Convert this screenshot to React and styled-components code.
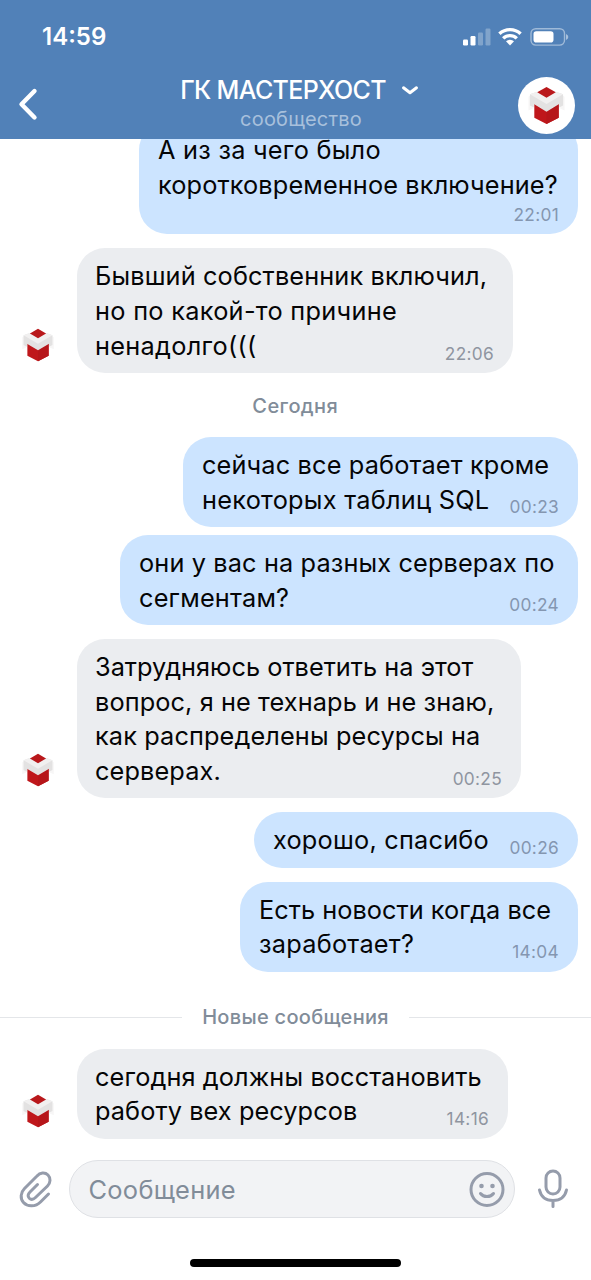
import React from "react";
import styled, { createGlobalStyle } from "styled-components";

const GlobalStyle = createGlobalStyle`
  * {
    box-sizing: border-box;
  }
  body {
    margin: 0;
    background: #fff;
    font-family: Inter, "Liberation Sans", sans-serif;
  }
`;

const Screen = styled.div`
  width: 591px;
  height: 1280px;
  display: flex;
  flex-direction: column;
  overflow: hidden;
  background: #fff;
`;
const Header = styled.header`
  height: 139px;
  flex: none;
  background: #5181b8;
  color: #fff;
`;
const StatusBar = styled.div`
  height: 74px;
  padding: 0 22px 0 42px;
  display: flex;
  align-items: center;
  justify-content: space-between;
`;
const Clock = styled.div`
  font-size: 24px;
  font-weight: 600;
  line-height: 28px;
`;
const StatusIcons = styled.svg`
  width: 106px;
  height: 20px;
  display: block;
`;
const NavBar = styled.div`
  height: 65px;
  padding: 0 16px;
  display: grid;
  grid-template-columns: 60px 1fr 60px;
  align-items: start;
`;
const BackButton = styled.button`
  width: 24px;
  height: 34px;
  margin-top: 13px;
  padding: 0;
  border: 0;
  background: none;
`;
const Heading = styled.div`
  display: flex;
  flex-direction: column;
  align-items: center;
`;
const Title = styled.div`
  display: flex;
  align-items: center;
  gap: 15px;
  padding-left: 8px;
  font-size: 25px;
  font-weight: 450;
  line-height: 32px;
  letter-spacing: -0.65px;
  white-space: nowrap;
`;
const Subtitle = styled.div`
  padding-left: 11px;
  font-size: 20px;
  line-height: 26px;
  letter-spacing: 0.2px;
  color: #a8c0dc;
`;
const HeaderAvatar = styled.div`
  width: 57px;
  height: 57px;
  margin: 3px 0 0 3px;
  display: flex;
  align-items: center;
  justify-content: center;
  border-radius: 50%;
  background: #fff;
`;
const Chat = styled.main`
  height: 1021px;
  flex: none;
  display: flex;
  flex-direction: column;
  justify-content: flex-end;
  padding: 0 13.5px 21.5px 13px;
  overflow: hidden;
`;
const Row = styled.div`
  flex: none;
  display: flex;
  align-items: flex-end;
  justify-content: ${(p) => (p.$own ? "flex-end" : "flex-start")};
  margin-top: ${(p) => (p.$tight ? 8 : 14)}px;
`;
const Avatar = styled.div`
  width: 50px;
  height: 50px;
  margin: 0 13.5px 3px 0;
  display: flex;
  align-items: center;
  justify-content: center;
`;
const Bubble = styled.div`
  width: ${(p) => p.$width}px;
  padding: 11.1px 18.5px 9.5px ${(p) => (p.$own ? 19.1 : 18.5)}px;
  border-radius: 28px;
  background: ${(p) => (p.$own ? "#cce4ff" : "#ebedf0")};
`;
const Line = styled.div`
  display: flex;
  justify-content: space-between;
  height: 34.7px;
  font-size: 25.3px;
  line-height: 34.7px;
  letter-spacing: ${(p) => p.$spacing}px;
  color: #050506;
  white-space: nowrap;
`;
const Time = styled.div`
  align-self: flex-end;
  font-size: 17.3px;
  line-height: 20px;
  letter-spacing: 0.3px;
  color: ${(p) => (p.$own ? "#8496b0" : "#8f95a0")};
`;
const TimeRow = styled.div`
  height: 22px;
  display: flex;
  justify-content: flex-end;
`;
const DayLabel = styled.div`
  flex: none;
  height: 22px;
  margin: 22px 0 6px;
  font-size: 20px;
  font-weight: 500;
  line-height: 22px;
  letter-spacing: 0.4px;
  text-align: center;
  color: #818c99;
`;
const NewMessages = styled.div`
  flex: none;
  height: 22px;
  margin: 34.5px -13.5px 6.5px -13px;
  display: flex;
  align-items: center;
  gap: 20px;
  font-size: 20px;
  font-weight: 500;
  line-height: 22px;
  letter-spacing: 0.3px;
  color: #818c99;
  &::before,
  &::after {
    content: "";
    flex: 1;
    height: 1px;
    background: #e4e6e9;
  }
`;
const Composer = styled.footer`
  flex: none;
  display: flex;
  align-items: center;
  padding: 0 19px;
`;
const Field = styled.div`
  width: 446px;
  height: 58px;
  margin: 0 22px 0 17px;
  padding: 0 9px 0 18.5px;
  display: flex;
  align-items: center;
  justify-content: space-between;
  border: 1.5px solid #dfe1e5;
  border-radius: 29px;
  background: #f2f3f5;
  font-size: 25.4px;
  letter-spacing: 0.3px;
  color: #818c99;
`;
const Icon = styled.svg`
  display: block;
  flex: none;
  fill: none;
  stroke: #959cab;
  stroke-width: 3;
  stroke-linecap: round;
  stroke-linejoin: round;
`;
const HomeIndicator = styled.div`
  width: 211px;
  height: 8px;
  margin: 41px auto 0;
  border-radius: 4px;
  background: #000;
`;

function Logo({ size }) {
  return (
    <svg width={size} height={size} viewBox="0 0 40 40">
      <path d="M1.500 11 L6 8 V23 L1.500 25Z M38.500 11 L34 8 V23 L38.500 25Z" fill="#f7f6f6" />
      <path d="M7.500 17 L20 25 L32.500 17 V32.500 L20 39 L7.500 32.500Z" fill="#bf171b" />
      <path d="M20 24 L32.500 17 V32.500 L20 39Z" fill="#b6161a" />
      <path d="M3 8.500 L10.500 6 L20 11.500 L29.500 6 L37 8.500 V20 L33 22 V18.500 L20 26.300 L7 18.500 V22 L3 20Z" fill="#e3e2e2" />
      <path d="M3 8.500 L10.500 6 L20 11.500 L29.500 6 L37 8.500 L20 18.500Z" fill="#f1f0f0" />
      <path d="M20 1 L29.500 6.500 L20 12 L10.500 6.500Z" fill="#b9181b" />
    </svg>
  );
}

// each line is [text, letter spacing]
function Message({ own, tight, width, lines, time, timeBelow }) {
  return (
    <Row $own={own} $tight={tight}>
      {!own && (
        <Avatar>
          <Logo size={34} />
        </Avatar>
      )}
      <Bubble $own={own} $width={width}>
        {lines.map(([text, spacing], i) => (
          <Line key={text} $spacing={spacing}>
            <span>{text}</span>
            {i === lines.length - 1 && !timeBelow && <Time $own={own}>{time}</Time>}
          </Line>
        ))}
        {timeBelow && (
          <TimeRow>
            <Time $own={own}>{time}</Time>
          </TimeRow>
        )}
      </Bubble>
    </Row>
  );
}

function App() {
  return (
    <Screen>
      <GlobalStyle />
      <Header>
        <StatusBar>
          <Clock>14:59</Clock>
          <StatusIcons viewBox="0 0 106 20" fill="#fff">
            <rect x="0" y="12.5" width="5" height="6" rx="1.2" />
            <rect x="7.5" y="9" width="5" height="9.5" rx="1.2" />
            <rect x="15" y="5.5" width="5" height="13" rx="1.2" opacity="0.28" />
            <rect x="22.5" y="1.5" width="5" height="17" rx="1.2" opacity="0.28" />
            <g fill="none" stroke="#fff" strokeWidth="3.4">
              <path d="M36.4 6.8 A15.5 15.5 0 0 1 57.6 6.8" />
              <path d="M40.2 11.4 A9.8 9.8 0 0 1 53.8 11.4" />
            </g>
            <path d="M43 14.3 A5.7 5.7 0 0 1 51 14.3 L47 18.4Z" />
            <rect x="68" y="1.7" width="33.5" height="16.4" rx="4.8" fill="none" stroke="#fff" strokeWidth="1.4" opacity="0.45" />
            <rect x="70.5" y="4.2" width="20" height="11.4" rx="2.8" />
            <path d="M103 7 Q105.3 8 105.3 10 Q105.3 12 103 13Z" opacity="0.5" />
          </StatusIcons>
        </StatusBar>
        <NavBar>
          <BackButton>
            <svg width="24" height="34" fill="none" stroke="#fff" strokeWidth="4.4" strokeLinecap="round" strokeLinejoin="round">
              <path d="M18.5 4 L5.5 17.2 L18.5 30.500" />
            </svg>
          </BackButton>
          <Heading>
            <Title>
              ГК МАСТЕРХОСТ
              <svg width="18" height="12" fill="none" stroke="#fff" strokeWidth="3" strokeLinecap="round" strokeLinejoin="round">
                <path d="M2.500 3.800 L9 8.800 L15.500 3.800" />
              </svg>
            </Title>
            <Subtitle>сообщество</Subtitle>
          </Heading>
          <HeaderAvatar>
            <Logo size={39} />
          </HeaderAvatar>
        </NavBar>
      </Header>
      <Chat>
        <Message
          own
          width={438.6}
          lines={[
            ["А из за чего было", 0.25],
            ["коротковременное включение?", 0.13],
          ]}
          time="22:01"
          timeBelow
        />
        <Message
          width={436}
          lines={[
            ["Бывший собственник включил,", 0.13],
            ["но по какой-то причине", 0.3],
            ["ненадолго(((", 0.3],
          ]}
          time="22:06"
        />
        <DayLabel>Сегодня</DayLabel>
        <Message
          own
          width={394.6}
          lines={[
            ["сейчас все работает кроме", 0.15],
            ["некоторых таблиц SQL", 0.26],
          ]}
          time="00:23"
        />
        <Message
          own
          tight
          width={457.6}
          lines={[
            ["они у вас на разных серверах по", 0.13],
            ["сегментам?", 0.2],
          ]}
          time="00:24"
        />
        <Message
          width={444}
          lines={[
            ["Затрудняюсь ответить на этот", 0.02],
            ["вопрос, я не технарь и не знаю,", 0.1],
            ["как распределены ресурсы на", 0.12],
            ["серверах.", 0.12],
          ]}
          time="00:25"
        />
        <Message own width={323.6} lines={[["хорошо, спасибо", 0.23]]} time="00:26" />
        <Message
          own
          width={337.6}
          lines={[
            ["Есть новости когда все", 0.03],
            ["заработает?", 0.26],
          ]}
          time="14:04"
        />
        <NewMessages>Новые сообщения</NewMessages>
        <Message
          width={431}
          lines={[
            ["сегодня должны восстановить", 0.11],
            ["работу вех ресурсов", 0.08],
          ]}
          time="14:16"
        />
      </Chat>
      <Composer>
        <Icon width="33" height="38" viewBox="0 0 33 38">
          <path d="M29.5 24 L21.500 32 C16.500 37 8.500 37 4.500 32.500 C1 28.500 1.500 22.500 5.500 18.500 L18 6 C21 2.500 26 2 29 5 C32 8 31.500 13 28.500 16 L16.500 27.500 C14.500 29.500 12 30 10.300 28.300 C8.600 26.500 9 24 11 22 L18.500 14.500" />
        </Icon>
        <Field>
          Сообщение
          <Icon width="36" height="36" viewBox="0 0 36 36">
            <circle cx="18" cy="18.500" r="16" />
            <path d="M11.500 22.500 C14.500 26.500 21.500 26.500 24.500 22.500" />
            <circle cx="12.500" cy="15" r="2.300" fill="#959cab" stroke="none" />
            <circle cx="23.500" cy="15" r="2.300" fill="#959cab" stroke="none" />
          </Icon>
        </Field>
        <Icon width="32" height="40" viewBox="0 0 32 40">
          <rect x="9" y="2" width="14" height="23" rx="7" />
          <path d="M2.500 21 C4 28 9 31.500 16 31.500 C23 31.500 28 28 29.500 21 M16 32 V37.500" />
        </Icon>
      </Composer>
      <HomeIndicator />
    </Screen>
  );
}

export default App;
